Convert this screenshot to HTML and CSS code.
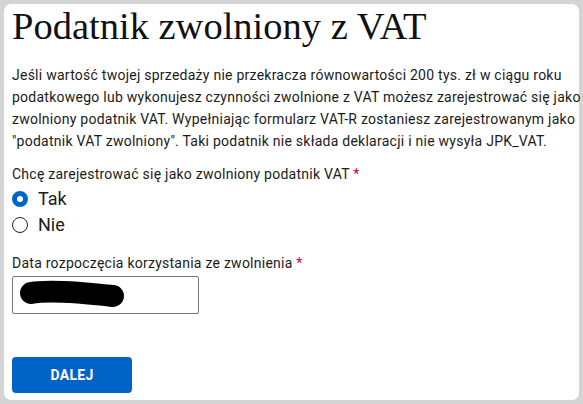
FILE: index.html
```html
<!DOCTYPE html>
<html lang="pl">
<head>
<meta charset="utf-8">
<link rel="stylesheet" href="styles.css">
</head>
<body>
<div class="card">
  <h1 class="title">Podatnik zwolniony z VAT</h1>
  <p class="intro">Jeśli wartość twojej sprzedaży nie przekracza równowartości 200 tys. zł w ciągu roku<br>podatkowego lub wykonujesz czynności zwolnione z VAT możesz zarejestrować się jako<br>zwolniony podatnik VAT. Wypełniając formularz VAT-R zostaniesz zarejestrowanym jako<br>"podatnik VAT zwolniony". Taki podatnik nie składa deklaracji i nie wysyła JPK_VAT.</p>
  <div class="field">
    <div class="label">Chcę zarejestrować się jako zwolniony podatnik VAT <span class="req">*</span></div>
    <label class="radio"><span class="dot checked"></span><span>Tak</span></label>
    <label class="radio"><span class="dot"></span><span>Nie</span></label>
  </div>
  <div class="field date">
    <div class="label">Data rozpoczęcia korzystania ze zwolnienia <span class="req">*</span></div>
    <div class="input">
      <svg class="scribble" width="120" height="36" viewBox="0 0 120 36"><path d="M18 16 C 34 13, 64 15, 100 19" stroke="#000" stroke-width="22" stroke-linecap="round" fill="none"/></svg>
    </div>
  </div>
  <button class="btn">DALEJ</button>
</div>
</body>
</html>
```
FILE: styles.css
```css
html, body { margin: 0; padding: 0; }
body {
  background: #d4d4d4;
  width: 583px;
  height: 404px;
  padding: 4px;
  box-sizing: border-box;
  font-family: Roboto, "Noto Sans", sans-serif;
  color: #1b1b1b;
}
.card {
  background: #fff;
  width: 575px;
  height: 396px;
  border-radius: 7px;
  padding: 0 0 0 8px;
  box-sizing: border-box;
  display: flex;
  flex-direction: column;
  align-items: flex-start;
}
.title {
  font-family: "Liberation Serif", "Times New Roman", serif;
  font-weight: normal;
  font-size: 38.5px;
  line-height: 40px;
  margin: 2px 0 0;
  color: #111;
}
.intro {
  font-size: 14px;
  line-height: 22px;
  letter-spacing: 0.25px;
  white-space: nowrap;
  margin: 18px 0 0;
  color: #1b1b1b;
}
.field { margin-top: 10px; display: flex; flex-direction: column; }
.label { font-size: 14px; line-height: 24px; letter-spacing: 0.25px; }
.req { color: #d3003a; }
.radio {
  display: flex;
  align-items: center;
  gap: 10px;
  font-size: 18px;
  line-height: 26px;
  height: 26px;
}
.dot {
  width: 16px;
  height: 16px;
  border-radius: 50%;
  border: 1.5px solid #222;
  box-sizing: border-box;
  background: #fff;
}
.dot.checked {
  border: 5px solid #0065c8;
  background: #fff;
}
.date { margin-top: 13px; }
.input {
  margin-top: 1px;
  width: 187px;
  height: 38px;
  border: 1px solid #777;
  border-radius: 2px;
  box-sizing: border-box;
  display: flex;
  align-items: center;
}
.scribble { display: block; }
.btn {
  margin-top: 43px;
  width: 120px;
  height: 36px;
  background: #0063c6;
  color: #fff;
  border: none;
  border-radius: 4px;
  font-family: Roboto, sans-serif;
  font-weight: bold;
  font-size: 14px;
  letter-spacing: 0.3px;
}
```
